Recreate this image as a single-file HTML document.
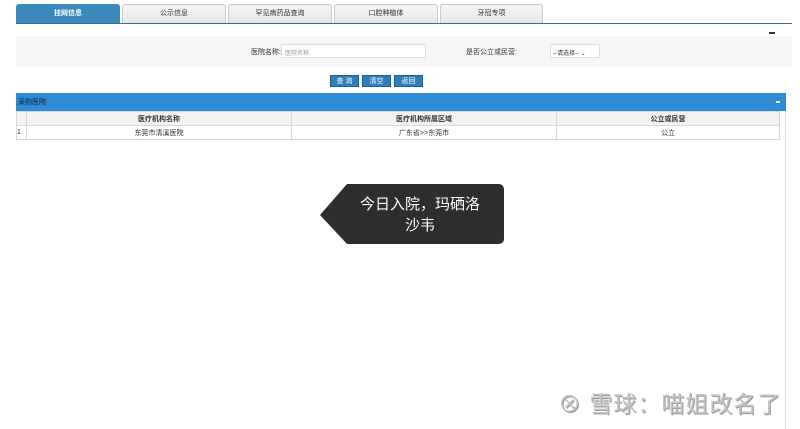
<!DOCTYPE html>
<html><head><meta charset="utf-8"><style>
*{margin:0;padding:0;box-sizing:border-box}
body{width:800px;height:429px;background:#fff;position:relative;overflow:hidden;font-family:"Liberation Sans","Noto Sans CJK SC",sans-serif;font-size:7px;color:#333}
.a{position:absolute}
.tab{position:absolute;top:4px;height:19px;border:1px solid #c8c8c8;border-bottom:none;border-radius:3px 3px 0 0;background:linear-gradient(#f6f6f6,#e6e6e6);text-align:center;line-height:18px;font-size:7px;color:#333}
.btn{position:absolute;top:75px;height:12px;background:#2f7fb8;color:#fff;font-size:7px;line-height:12px;text-align:center;border:1px solid #1d5f8e}
td{border:1px solid #d8d8d8;height:14px;text-align:center;font-size:7px}
</style></head><body>
<div class="tab" style="left:16px;width:104px;background:#3b88bd;border-color:#3b88bd;color:#fff;font-weight:bold">挂网信息</div>
<div class="tab" style="left:122px;width:104px">公示信息</div>
<div class="tab" style="left:228px;width:104px">罕见病药品查询</div>
<div class="tab" style="left:334px;width:104px">口腔种植体</div>
<div class="tab" style="left:440px;width:103px">牙冠专项</div>
<div class="a" style="left:16px;top:23px;width:776px;height:1px;background:#3b6b8a"></div>
<div class="a" style="left:769px;top:32px;width:6px;height:2px;background:#333"></div>
<div class="a" style="left:16px;top:36px;width:776px;height:31px;background:#f6f6f6"></div>
<div class="a" style="left:251px;top:47px">医院名称:</div>
<div class="a" style="left:281px;top:44px;width:145px;height:14px;border:1px solid #ddd;background:#fff;padding:3px 3px;color:#999;font-size:6px">医院名称</div>
<div class="a" style="left:466px;top:47px">是否公立或民营:</div>
<div class="a" style="left:550px;top:44px;width:50px;height:14px;border:1px solid #ddd;background:#fff;padding:3px 2px;font-size:6px">--请选择-- ⌄</div>
<div class="btn" style="left:330px;width:29px">查 询</div>
<div class="btn" style="left:362px;width:29px">清空</div>
<div class="btn" style="left:394px;width:29px">返回</div>
<div class="a" style="left:16px;top:93px;width:770px;height:18px;background:#2f8bd6;color:#123;padding:4px 2px;font-size:7px">采购医院</div>
<div class="a" style="left:776px;top:101px;width:4px;height:2px;background:#fff"></div>
<div class="a" style="left:785px;top:111px;width:1px;height:318px;background:#ddd"></div>
<table class="a" style="left:16px;top:111px;width:764px;border-collapse:collapse">
<tr style="background:#f2f2f2;font-weight:bold"><td style="width:10px"></td><td style="width:265px">医疗机构名称</td><td style="width:265px">医疗机构所属区域</td><td>公立或民营</td></tr>
<tr><td style="text-align:left">1</td><td>东莞市清溪医院</td><td>广东省&gt;&gt;东莞市</td><td>公立</td></tr>
</table>
<svg class="a" style="left:319px;top:184px" width="186" height="61"><path d="M28 0H180a5 5 0 0 1 5 5V55a5 5 0 0 1-5 5H28L1 31Z" fill="#2e2e2e"/></svg>
<div class="a" style="left:340px;top:194px;width:160px;text-align:center;color:#fff;font-size:15px;line-height:21px">今日入院，玛硒洛<br>沙韦</div>
<div class="a" style="left:558px;top:391px;color:#c4c4c4;font-size:23px;line-height:26px;letter-spacing:1px;text-shadow:1px 1px 0 #999">⊗ 雪球：喵姐改名了</div>
</body></html>
